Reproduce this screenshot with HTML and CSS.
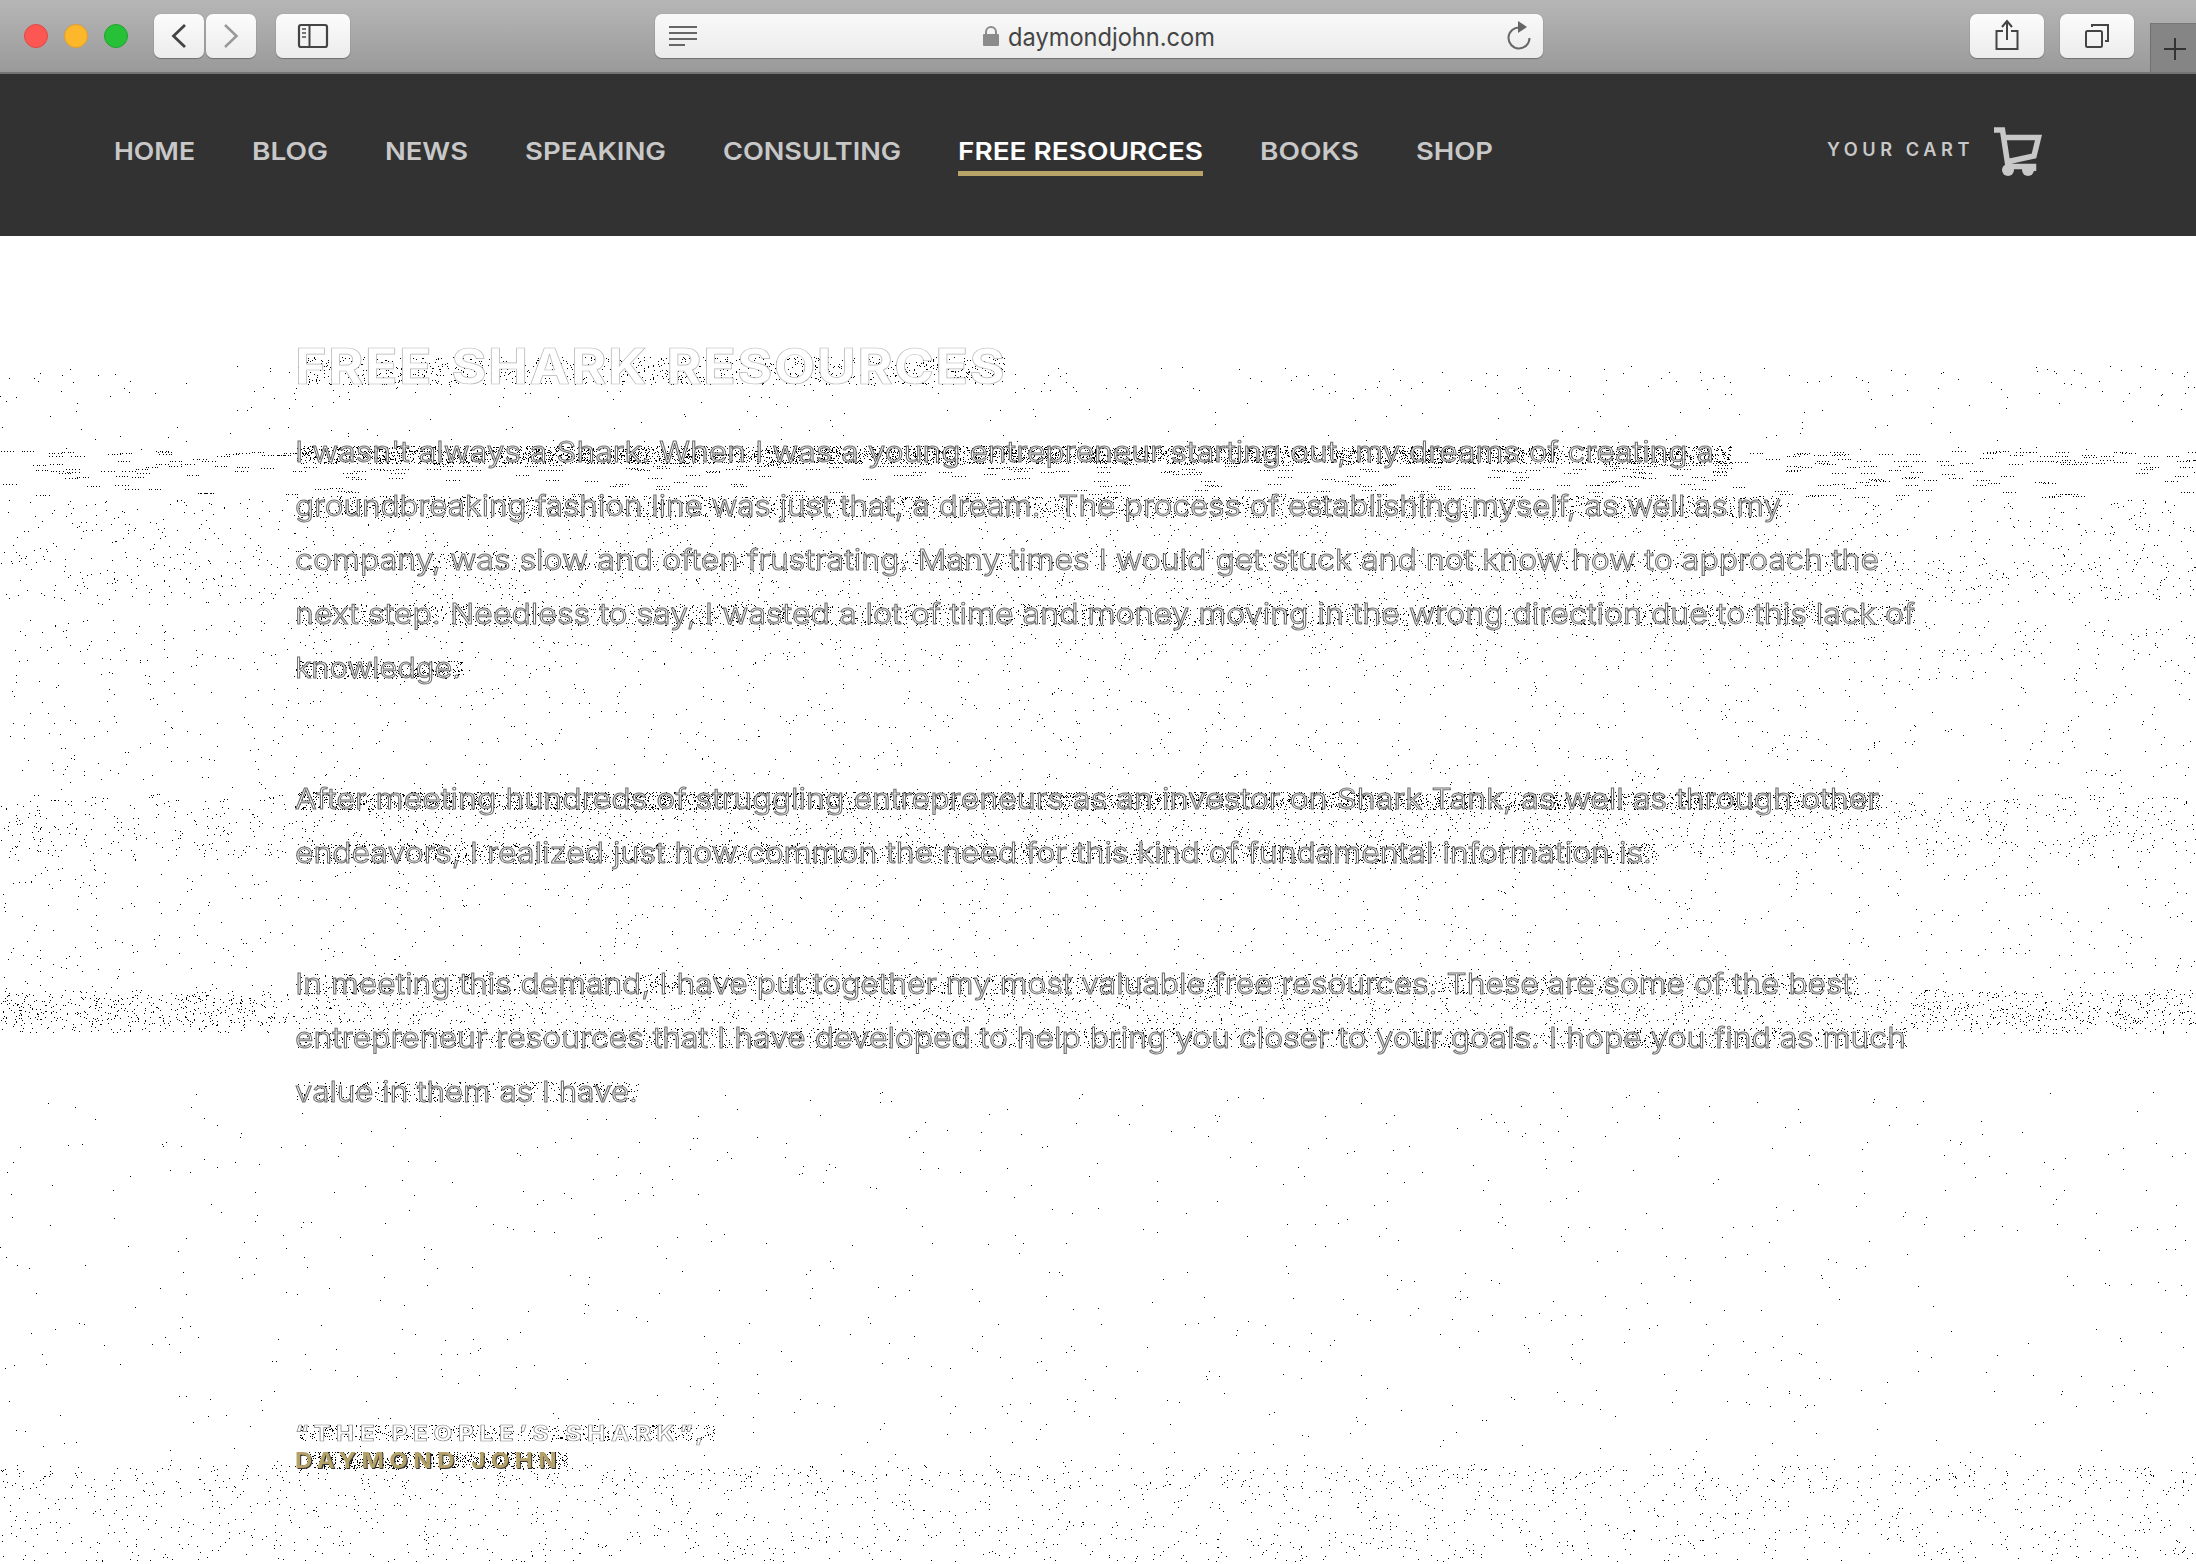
FILE: index.html
```html
<!DOCTYPE html>
<html lang="en">
<head>
<meta charset="utf-8">
<title>Free Shark Resources</title>
<link rel="stylesheet" href="styles.css">
</head>
<body>
<header class="toolbar">
  <div class="lights"><i class="red"></i><i class="yellow"></i><i class="green"></i></div>
  <div class="history">
    <button class="btn small"><svg width="50" height="44"><path d="M31 11 19.500 22 31 33" stroke="#444" stroke-width="2.800"/></svg></button>
    <button class="btn small"><svg width="50" height="44"><path d="M19 11 30.500 22 19 33" stroke="#999" stroke-width="2.500"/></svg></button>
  </div>
  <button class="btn sidebar"><svg width="74" height="44"><rect x="23" y="11" width="28" height="22" rx="2" stroke="#444" stroke-width="2.200"/><path d="M33.500 11v22" stroke="#444" stroke-width="2"/><path d="M26 15h4M26 19h4M26 23h4" stroke="#777" stroke-width="2"/></svg></button>
  <div class="address">
    <svg class="reader" width="30" height="24"><path d="M0 3h28M0 9h28M0 15h28M0 21h16" stroke="#666" stroke-width="2"/></svg>
    <div class="site">
      <svg width="16" height="22"><rect y="9" width="16" height="12" rx="1" fill="#8b8b8b"/><path d="M3 10V7a5 5 0 0 1 10 0v3" stroke="#8b8b8b" stroke-width="2"/></svg>
      <span class="fit url" data-w="207">daymondjohn.com</span>
    </div>
    <svg class="reload" width="26" height="30"><path d="M13 6.500a10.500 10.500 0 1 0 9.500 10.500" stroke="#666" stroke-width="2"/><path d="M11 0l9 6-9 6z" fill="#666"/></svg>
  </div>
  <div class="actions">
    <button class="btn"><svg width="74" height="44"><path d="M33 17h-6.500v18h21V17H41M37 26V8M32 13l5-6 5 6" stroke="#444" stroke-width="2"/></svg></button>
    <button class="btn"><svg width="74" height="44"><rect x="26" y="17" width="16" height="16" rx="1.500" stroke="#444" stroke-width="2"/><path d="M32 13v-2h16v16h-3" stroke="#444" stroke-width="2"/></svg></button>
  </div>
  <div class="newtab"><svg width="45" height="48"><path d="M13 25h22M24 14v22" stroke="#333" stroke-width="2"/></svg></div>
</header>
<nav class="menu">
  <a class="w-home"><span class="fit" data-w="81">HOME</span></a>
  <a class="w-blog"><span class="fit" data-w="76">BLOG</span></a>
  <a class="w-news"><span class="fit" data-w="83">NEWS</span></a>
  <a class="w-speaking"><span class="fit" data-w="141">SPEAKING</span></a>
  <a class="w-consulting"><span class="fit" data-w="178">CONSULTING</span></a>
  <a class="w-free active"><span class="fit" data-w="245">FREE RESOURCES</span></a>
  <a class="w-books"><span class="fit" data-w="99">BOOKS</span></a>
  <a class="w-shop"><span class="fit" data-w="77">SHOP</span></a>
  <div class="cart">
    <span class="fit cart-label" data-w="147">YOUR CART</span>
    <svg width="50" height="50"><path d="M0 3h8.500l5.500 36M10.500 10.500H44.500L40 29 14.500 34.500M14 39.500H39.500V44" stroke="#c8c8c8" stroke-width="5.500"/><circle cx="14" cy="43" r="6" fill="#c8c8c8"/><circle cx="34" cy="43" r="6" fill="#c8c8c8"/></svg>
  </div>
</nav>
<main class="page">
  <canvas class="grain" width="2196" height="1328"></canvas>
  <h1><span class="fit" data-w="711">FREE SHARK RESOURCES</span></h1>
  <p>
    <span class="line"><span class="fit" data-w="1419">I wasn't always a Shark. When I was a young entrepreneur starting out, my dreams of creating a</span></span>
    <span class="line"><span class="fit" data-w="1486">groundbreaking fashion line was just that, a dream.&nbsp; The process of establishing myself, as well as my</span></span>
    <span class="line"><span class="fit" data-w="1584">company, was slow and often frustrating. Many times I would get stuck and not know how to approach the</span></span>
    <span class="line"><span class="fit" data-w="1620">next step. Needless to say, I wasted a lot of time and money moving in the wrong direction due to this lack of</span></span>
    <span class="line"><span class="fit" data-w="166">knowledge.</span></span>
  </p>
  <p>
    <span class="line"><span class="fit" data-w="1584">After meeting hundreds of struggling entrepreneurs as an investor on Shark Tank, as well as through other</span></span>
    <span class="line"><span class="fit" data-w="1357">endeavors, I realized just how common the need for this kind of fundamental information is.</span></span>
  </p>
  <p>
    <span class="line"><span class="fit" data-w="1557">In meeting this demand, I have put together my most valuable free resources. These are some of the best</span></span>
    <span class="line"><span class="fit" data-w="1611">entrepreneur resources that I have developed to help bring you closer to your goals. I hope you find as much</span></span>
    <span class="line"><span class="fit" data-w="343">value in them as I have.</span></span>
  </p>
  <div class="signature">
    <div class="role"><span class="fit" data-w="414">“THE PEOPLE’S SHARK”,</span></div>
    <div class="name"><span class="fit" data-w="267">DAYMOND JOHN</span></div>
  </div>
</main>
<script src="page.js"></script>
</body>
</html>
```
FILE: styles.css
```css
* { box-sizing: border-box; }
body { margin: 0; width: 2196px; height: 1564px; overflow: hidden; background: #fff; font-family: Inter, "Open Sans", sans-serif; }
svg { display: block; fill: none; flex: none; }
.fit { display: inline-block; white-space: nowrap; transform-origin: 0 50%; }

.toolbar { display: flex; align-items: flex-start; height: 74px; padding: 14px 0 0 24px; background: linear-gradient(#b6b6b6, #9a9a9a); border-bottom: 2px solid #747474; }
.lights { display: flex; gap: 16px; padding-top: 10px; width: 130px; }
.lights i { width: 24px; height: 24px; border-radius: 50%; }
.red { background: #fc5753; border: 1px solid #df4744; }
.yellow { background: #fdb72b; border: 1px solid #de9f2c; }
.green { background: #27c138; border: 1px solid #23a032; }
.history { display: flex; gap: 2px; margin-right: 20px; }
.btn { width: 74px; height: 44px; padding: 0; border: 0; border-radius: 7px; background: linear-gradient(#fcfcfc, #ececec); box-shadow: 0 1px 1px #707070, 0 0 1px #888; }
.small { width: 50px; }
.address { display: flex; align-items: center; justify-content: space-between; width: 888px; height: 44px; margin: 0 427px 0 305px; padding: 0 10px 0 14px; border-radius: 7px; background: linear-gradient(#f9f9f9, #ebebeb); box-shadow: 0 1px 1px #707070, 0 0 1px #888; }
.site { display: flex; align-items: center; gap: 9px; width: 234px; color: #444; font-size: 25px; margin-right: 6px; }
.url { padding-top: 2px; }
.actions { display: flex; gap: 16px; }
.newtab { width: 46px; height: 49px; margin: 9px 0 0 16px; background: #858585; border-left: 1px solid #707070; border-top: 1px solid #777; }

.menu { display: flex; gap: 57px; height: 162px; padding: 61px 0 0 113.500px; background: #323232; color: #c8c8c8; font-size: 24.500px; font-weight: 600; }
.menu a { height: 41px; line-height: 32px; }
.menu .active { color: #fff; border-bottom: 5px solid #b8a468; }
.w-home { width: 81px; }
.w-blog { width: 76px; }
.w-news { width: 83px; }
.w-speaking { width: 141px; }
.w-consulting { width: 178px; }
.w-free { width: 245px; }
.w-books { width: 99px; }
.w-shop { width: 77px; }
.cart { display: flex; gap: 20px; margin-left: 277px; margin-top: -8px; height: 50px; }
.cart-label { width: 147px; line-height: 42px; padding-top: 2px; font-size: 18px; letter-spacing: 4.500px; }

.page { position: relative; height: 1326px; padding: 101px 0 0 295px; color: #fff; }
.grain { position: absolute; left: 0; top: -2px; }
h1, p, .signature { position: relative; margin: 0; }
h1 { height: 60px; line-height: 60px; margin-bottom: 28px; font-size: 49px; font-weight: 700; letter-spacing: 1px; word-spacing: 4px; -webkit-text-stroke: 0.700px #b8b8b8; }
p { margin-bottom: 77px; font-size: 29px; line-height: 54px; font-weight: 300; -webkit-text-stroke: 1px #6c6c6c; }
.line { display: block; height: 54px; }
.signature { margin-top: 301px; font-size: 22px; line-height: 27px; font-weight: 700; letter-spacing: 5px; }
.signature div { height: 27px; }
.role { -webkit-text-stroke: 0.700px #888; }
.name { color: #b5a268; text-shadow: 1px 1px 0 #333; }
```
FILE: page.js
```js
// Stretch each label to its column width.
document.querySelectorAll('.fit').forEach(function (el) {
  var range = document.createRange();
  range.selectNodeContents(el);
  var natural = range.getBoundingClientRect().width;
  el.style.transform = 'scaleX(' + Number(el.dataset.w) / natural + ')';
});

// Stippled backdrop: black single-pixel dots in horizontal bands.
var ctx = document.querySelector('.grain').getContext('2d');
var seed = 7;
function rnd() {
  seed = (seed * 1664525 + 1013904223) >>> 0;
  return seed / 4294967296;
}
function stipple(x, y, w, h, density, run) {
  var n = w * h * density / run;
  for (var i = 0; i < n; i++) {
    var px = Math.floor(x + rnd() * w), py = Math.floor(y + rnd() * h) - 234;
    for (var k = 0; k < run; k++) ctx.fillRect(px + k * 3 + Math.floor(rnd() * 2), py, 1, 1);
  }
}
ctx.fillStyle = '#000';
[
  [0, 366, 2196, 30, .003, 1], [0, 396, 2196, 54, .0012, 1],
  [0, 451, 2196, 5, .06, 5], [0, 456, 2196, 18, .03, 5], [0, 474, 2196, 24, .014, 5],
  [0, 499, 2196, 100, .007, 1], [0, 560, 2196, 45, .005, 1], [0, 620, 2196, 50, .006, 1],
  [0, 670, 2196, 120, .0035, 1], [0, 793, 2196, 8, .015, 2], [0, 801, 2196, 57, .015, 1],
  [0, 858, 2196, 132, .0035, 1], [0, 990, 2196, 35, .022, 1], [0, 995, 270, 38, .03, 1],
  [1910, 992, 286, 42, .025, 1], [0, 1090, 2196, 375, .001, 1],
  [0, 1465, 2196, 99, .008, 1], [0, 1465, 2196, 24, .007, 1],
  [298, 357, 706, 28, .06, 1],
  [296, 446, 1435, 18, .18, 1], [296, 496, 1485, 22, .08, 1], [296, 551, 1590, 20, .04, 1],
  [296, 604, 1618, 22, .07, 1], [296, 661, 166, 18, .13, 1],
  [296, 792, 1584, 18, .14, 1], [296, 844, 1360, 20, .09, 1],
  [296, 974, 1562, 20, .07, 1], [296, 1028, 1610, 20, .07, 1], [296, 1082, 345, 20, .07, 1],
  [298, 1425, 416, 16, .09, 1], [298, 1452, 270, 17, .17, 1]
].forEach(function (b) { stipple.apply(null, b); });
```
